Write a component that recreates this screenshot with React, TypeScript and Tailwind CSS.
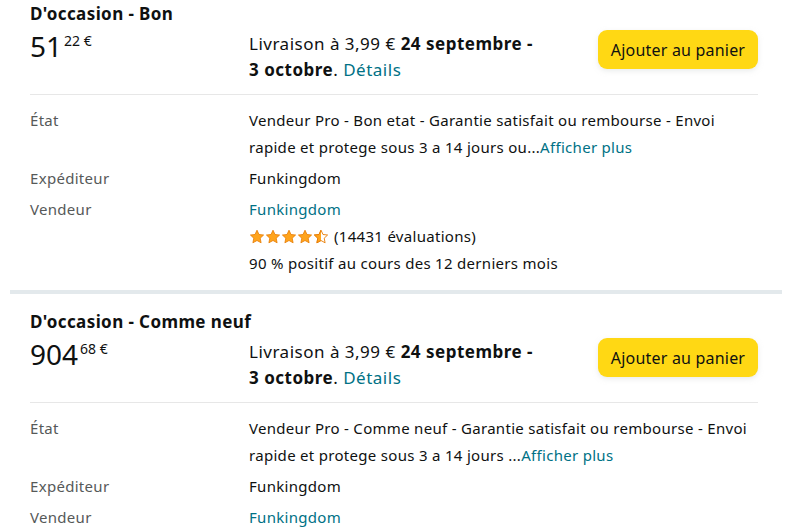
import { Fragment } from 'react';

type Offer = {
  condition: string;
  whole: string;
  cents: string;
  note: string;
  shipper: string;
  seller: string;
  showRating: boolean;
};

const offers: Offer[] = [
  {
    condition: "D'occasion - Bon",
    whole: '51',
    cents: '22',
    note: 'Vendeur Pro - Bon etat - Garantie satisfait ou rembourse - Envoi rapide et protege sous 3 a 14 jours ou...',
    shipper: 'Funkingdom',
    seller: 'Funkingdom',
    showRating: true,
  },
  {
    condition: "D'occasion - Comme neuf",
    whole: '904',
    cents: '68',
    note: 'Vendeur Pro - Comme neuf - Garantie satisfait ou rembourse - Envoi rapide et protege sous 3 a 14 jours ...',
    shipper: 'Funkingdom',
    seller: 'Funkingdom',
    showRating: false,
  },
];

function Star({ fill }: { fill: 'full' | 'half' }) {
  const d = 'M8 1.2l2 4.3 4.6.5-3.4 3.2.9 4.6L8 11.5l-4.1 2.3.9-4.6L1.4 6l4.6-.5z';
  return (
    <svg width="16" height="15" viewBox="0 0 16 15">
      <defs>
        <clipPath id="half-star">
          <rect x="0" y="0" width="8" height="15" />
        </clipPath>
      </defs>
      {fill === 'full' ? (
        <path d={d} fill="#FFA41C" stroke="#E67A00" strokeWidth="0.8" strokeLinejoin="round" />
      ) : (
        <>
          <path d={d} fill="#fff" stroke="#E67A00" strokeWidth="0.9" strokeLinejoin="round" />
          <path d={d} fill="#FFA41C" stroke="#E67A00" strokeWidth="0.8" clipPath="url(#half-star)" />
        </>
      )}
    </svg>
  );
}

function OfferBlock({ offer, first }: { offer: Offer; first: boolean }) {
  return (
    <div className={`pl-5 pr-6 ${first ? 'pt-[3px]' : 'pt-[17px]'} pb-[13px]`}>
      <h2 className="text-[17px] font-bold leading-[22px] tracking-[0.4px] text-[#0F1111]">{offer.condition}</h2>

      <div className="flex items-start pt-[5px] pb-[11px] border-b border-[#e7e7e7]">
        <div className="w-[219px] flex items-start leading-[32px] text-[#0F1111]">
          <span className="text-[28px]">{offer.whole}</span>
          <span className="text-[14px] leading-[20px] ml-[2px] mt-[1px]">{offer.cents} €</span>
        </div>
        <p className="mt-[1px] text-[17px] leading-[26px] tracking-[0.5px] text-[#0F1111]">
          Livraison à 3,99 € <span className="font-bold">24 septembre -</span>
          <br />
          <span className="font-bold">3 octobre</span>. <span className="text-[#007185]">Détails</span>
        </p>
        <button className="ml-auto h-[39px] w-[160px] rounded-[9px] bg-[#FFD814] text-[16px] tracking-[0.2px] text-[#0F1111] shadow-[0_2px_5px_rgba(213,217,217,0.5)]">
          Ajouter au panier
        </button>
      </div>

      <div className="grid grid-cols-[219px_1fr] gap-y-[4px] pt-3 text-[15px] leading-[27px] tracking-[0.3px]">
        <span className="text-[#565959]">État</span>
        <p className="text-[#0F1111]">
          {offer.note}
          <span className="text-[#007185]">Afficher plus</span>
        </p>
        <span className="text-[#565959]">Expéditeur</span>
        <span className="text-[#0F1111]">{offer.shipper}</span>
        <span className="text-[#565959]">Vendeur</span>
        <div>
          <div className="text-[#007185]">{offer.seller}</div>
          {offer.showRating && (
            <Fragment>
              <div className="flex items-center text-[#0F1111]">
                <span className="flex">
                  <Star fill="full" />
                  <Star fill="full" />
                  <Star fill="full" />
                  <Star fill="full" />
                  <Star fill="half" />
                </span>
                <span className="ml-[5px]">(14431 évaluations)</span>
              </div>
              <div className="text-[#0F1111]">90 % positif au cours des 12 derniers mois</div>
            </Fragment>
          )}
        </div>
      </div>
    </div>
  );
}

export default function App() {
  return (
    <div className="w-[800px] h-[530px] overflow-hidden bg-white pl-[10px] pr-[18px] font-['Noto_Sans',sans-serif]">
      {offers.map((offer, i) => (
        <Fragment key={i}>
          {i > 0 && <div className="h-[4px] bg-[#e3e9ec]" />}
          <OfferBlock offer={offer} first={i === 0} />
        </Fragment>
      ))}
    </div>
  );
}
